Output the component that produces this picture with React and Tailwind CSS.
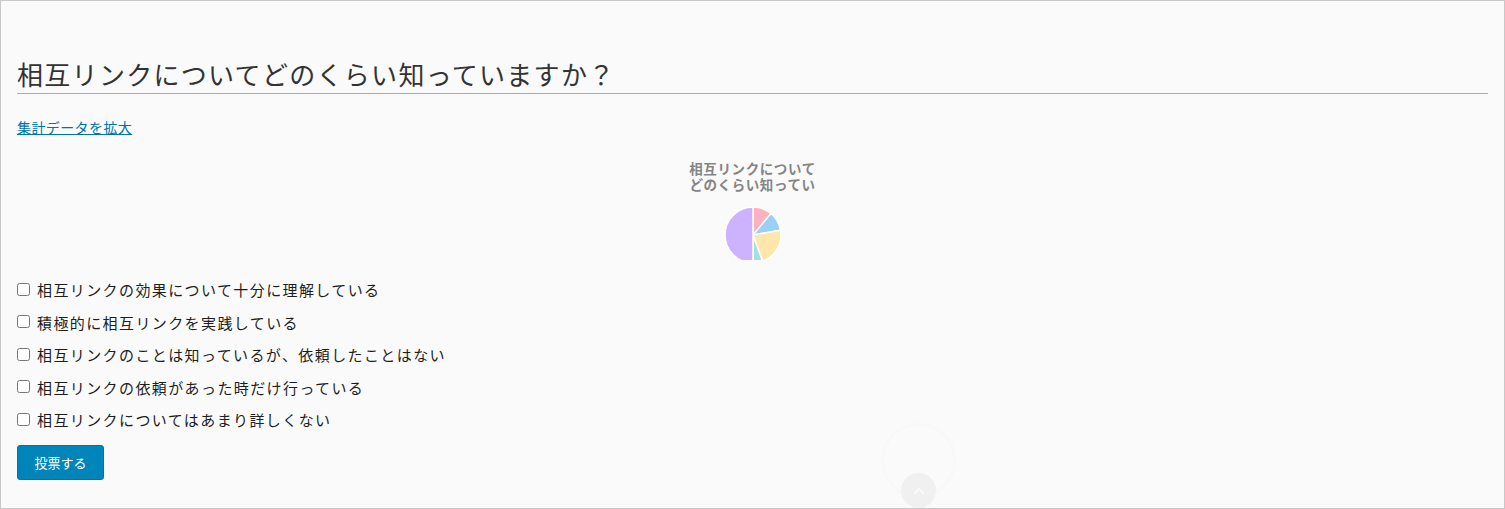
import React from 'react';

const options = [
  '相互リンクの効果について十分に理解している',
  '積極的に相互リンクを実践している',
  '相互リンクのことは知っているが、依頼したことはない',
  '相互リンクの依頼があった時だけ行っている',
  '相互リンクについてはあまり詳しくない',
];

// pie slices, clockwise from 12 o'clock
const slices = [
  { d: 'M30 30 L30 2 A28 28 0 0 1 48 8.55 Z', fill: '#ffb1c1' },
  { d: 'M30 30 L48 8.55 A28 28 0 0 1 57.57 25.14 Z', fill: '#9ad0f5' },
  { d: 'M30 30 L57.57 25.14 A28 28 0 0 1 39.58 56.31 Z', fill: '#ffe6aa' },
  { d: 'M30 30 L39.58 56.31 A28 28 0 0 1 30 58 Z', fill: '#a5dfdf' },
  { d: 'M30 30 L30 58 A28 28 0 0 1 30 2 Z', fill: '#ccb2ff' },
];

const PollChart = () => (
  <div className="mt-[23px] flex flex-col items-center">
    <p className="text-center text-[13.5px] font-bold leading-[16px] tracking-[0.6px] text-[#858585]">
      相互リンクについて
      <br />
      どのくらい知ってい
    </p>
    <svg width="60" height="55" viewBox="0 0 60 55" className="mt-[13px]">
      {slices.map((s, i) => (
        <path key={i} d={s.d} fill={s.fill} stroke="#fff" strokeWidth="1.5" strokeLinejoin="round" />
      ))}
    </svg>
  </div>
);

export default function App() {
  return (
    <div className="relative h-[509px] overflow-hidden border border-[#c8c8c8] bg-[#fafafa] px-4 pt-[55px] font-['Noto_Sans_CJK_JP',sans-serif]">
      <h2 className="border-b border-[#eba03c] pb-px text-[26px] font-normal leading-[36px] tracking-[1.3px] text-[#333]">
        相互リンクについてどのくらい知っていますか？
      </h2>

      <p className="mt-[23px] text-[14px] leading-5 tracking-[0.4px]">
        <a href="#" className="text-[#0073aa] underline">集計データを拡大</a>
      </p>

      <PollChart />

      <div className="mt-[14px] flex flex-col">
        {options.map((label) => (
          <label key={label} className="flex h-[32.5px] items-center text-[15px] tracking-[1.4px] text-[#1e1e1e]">
            <input type="checkbox" className="mb-[2px] h-[13px] w-[13px]" />
            <span className="ml-[7px]">{label}</span>
          </label>
        ))}
      </div>

      <button className="mt-[8.5px] flex h-[35px] w-[87px] items-center justify-center rounded-[3px] border border-[#0073aa] bg-[#0085ba] text-[13px] text-white">
        投票する
      </button>

      {/* scroll-to-top */}
      <div className="absolute left-[880px] top-[422px] h-[75px] w-[75px] rounded-full border-[3px] border-[#f8f8f8]" />
      <div className="absolute left-[900px] top-[472px] flex h-[35px] w-[35px] items-center justify-center rounded-full bg-[#f0f0f0]">
        <svg width="12" height="8" viewBox="0 0 12 8" fill="none" stroke="#fbfbfb" strokeWidth="1.6">
          <path d="M1 7 L6 2 L11 7" />
        </svg>
      </div>
    </div>
  );
}
